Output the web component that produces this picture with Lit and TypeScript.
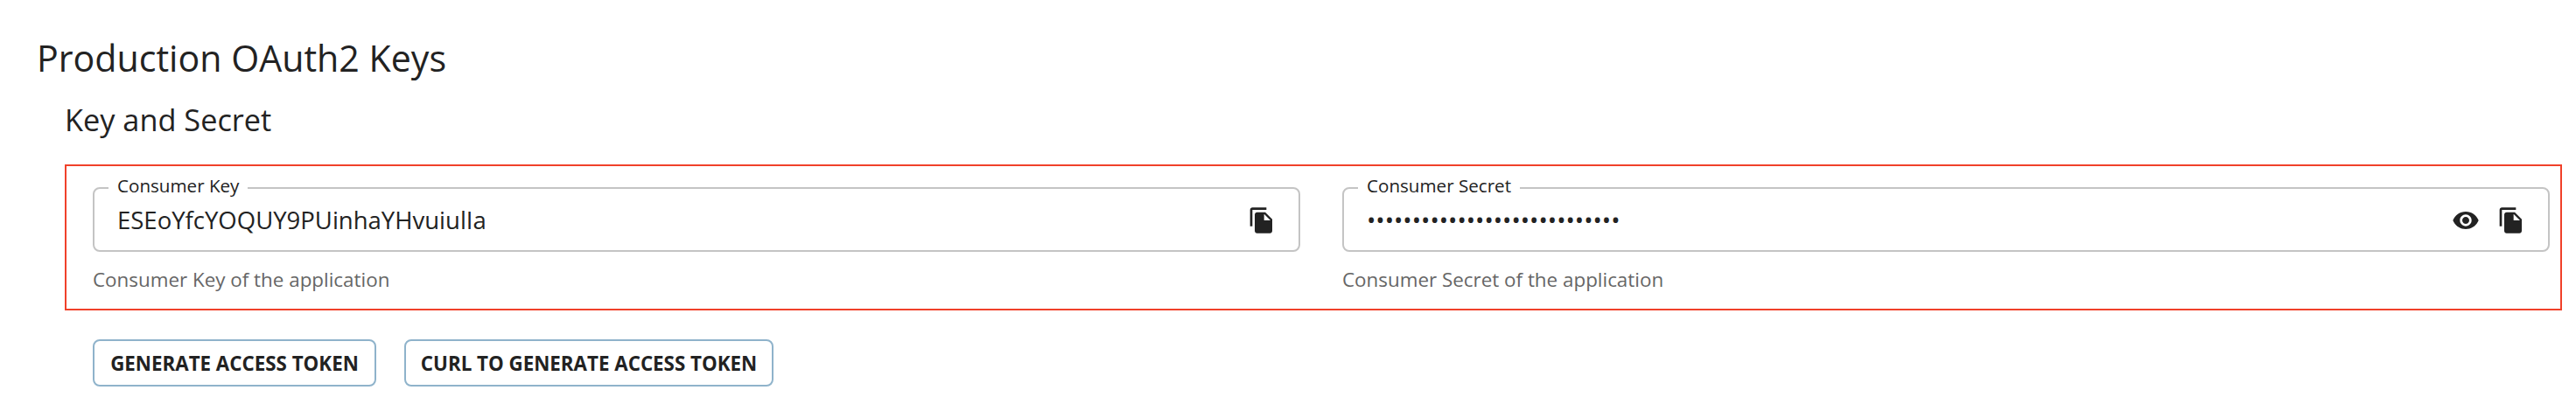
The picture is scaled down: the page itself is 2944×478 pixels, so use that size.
import { LitElement, html, css, nothing } from "lit";
import { customElement, property } from "lit/decorators.js";

@customElement("key-field")
class KeyField extends LitElement {
  @property() label = "";
  @property() value = "";
  @property() helper = "";
  @property({ type: Boolean }) secret = false;

  static styles = css`
    :host { display: block; flex: 1; min-width: 0; }
    .control {
      position: relative;
      display: flex;
      align-items: center;
      box-sizing: border-box;
      height: 74px;
      padding: 2px 26px 0;
      border: 2px solid #c4c4c4;
      border-radius: 8px;
    }
    .label {
      position: absolute;
      top: -16px;
      left: 16px;
      padding: 0 10px;
      background: #fff;
      font-size: 20.625px;
      line-height: 24px;
      white-space: nowrap;
    }
    .value { flex: 1; font-size: 27.5px; line-height: 40px; }
    .actions { display: flex; gap: 20px; }
    .icon { display: block; width: 32px; height: 32px; fill: #222; }
    .helper {
      margin-top: 17px;
      color: #666;
      font-size: 22.4px;
      line-height: 30px;
    }
  `;

  render() {
    return html`
      <div class="control">
        <span class="label">${this.label}</span>
        <span class="value">${this.secret ? "•".repeat(28) : this.value}</span>
        <span class="actions">
          ${this.secret
            ? html`<svg class="icon" viewBox="0 0 24 24"><path d="M12 4.5C7 4.5 2.73 7.61 1 12c1.73 4.39 6 7.5 11 7.5s9.27-3.11 11-7.5c-1.73-4.39-6-7.5-11-7.5zM12 17c-2.76 0-5-2.24-5-5s2.24-5 5-5 5 2.24 5 5-2.24 5-5 5zm0-8c-1.66 0-3 1.34-3 3s1.34 3 3 3 3-1.34 3-3-1.34-3-3-3z"/></svg>`
            : nothing}
          <svg class="icon" viewBox="0 0 24 24"><path d="M16 1H4c-1.1 0-2 .9-2 2v14h2V3h12V1zm-1 4l6 6v10c0 1.1-.9 2-2 2H7.99C6.89 23 6 22.1 6 21l.01-14c0-1.1.89-2 1.99-2h7zm-1 7h5.5L14 6.5V12z"/></svg>
        </span>
      </div>
      <div class="helper">${this.helper}</div>
    `;
  }
}

@customElement("app-root")
class AppRoot extends LitElement {
  static styles = css`
    :host {
      display: block;
      box-sizing: border-box;
      height: 478px;
      padding: 36px 16px 0 42px;
      background: #fff;
      color: #222;
      font-family: "Open Sans", sans-serif;
    }
    h1, h2 { margin: 0; font-weight: 400; }
    h1 { font-size: 41.15px; line-height: 60px; }
    .section { padding-left: 32px; }
    h2 { margin-top: 16px; font-size: 34.3px; line-height: 50px; }
    .keys {
      display: flex;
      gap: 48px;
      box-sizing: border-box;
      height: 167px;
      margin-top: 26px;
      padding: 24px 12px 0 30px;
      border: 2px solid #f0412a;
    }
    .buttons { display: flex; gap: 32px; margin: 33px 0 0 32px; }
    .btn {
      box-sizing: border-box;
      width: 324px;
      height: 54px;
      padding: 2px 0 0;
      border: 2px solid #8fb3cb;
      border-radius: 8px;
      background: #fff;
      color: #222;
      font: 700 22.34px/48px "Open Sans", sans-serif;
      white-space: nowrap;
    }
    .btn.wide { width: 422px; }
  `;

  render() {
    return html`
      <h1>Production OAuth2 Keys</h1>
      <div class="section">
        <h2>Key and Secret</h2>
        <div class="keys">
          <key-field label="Consumer Key" value="ESEoYfcYOQUY9PUinhaYHvuiulIa" helper="Consumer Key of the application"></key-field>
          <key-field secret label="Consumer Secret" helper="Consumer Secret of the application"></key-field>
        </div>
        <div class="buttons">
          <button class="btn">GENERATE ACCESS TOKEN</button>
          <button class="btn wide">CURL TO GENERATE ACCESS TOKEN</button>
        </div>
      </div>
    `;
  }
}
